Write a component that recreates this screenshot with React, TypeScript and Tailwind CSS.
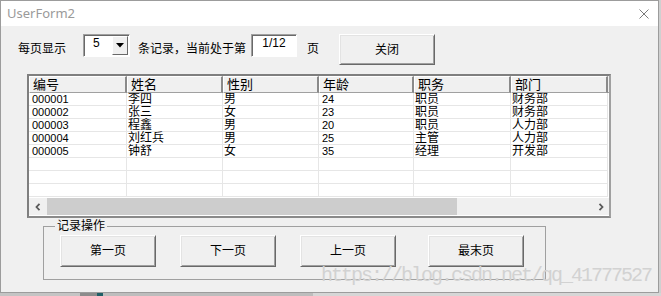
import React from 'react'

const rows = [
  ['000001', '李四', '男', '24', '职员', '财务部'],
  ['000002', '张三', '女', '23', '职员', '财务部'],
  ['000003', '程鑫', '男', '20', '职员', '人力部'],
  ['000004', '刘红兵', '男', '25', '主管', '人力部'],
  ['000005', '钟舒', '女', '35', '经理', '开发部'],
  ['', '', '', '', '', ''],
  ['', '', '', '', '', ''],
  ['', '', '', '', '', ''],
]

const cols = [
  { name: '编号', w: 'w-[98px]', num: true },
  { name: '姓名', w: 'w-[96px]', num: false },
  { name: '性别', w: 'w-[96px]', num: false },
  { name: '年龄', w: 'w-[95px]', num: true },
  { name: '职务', w: 'w-[97px]', num: false },
  { name: '部门', w: 'w-[97px]', num: false },
]

function Btn({ label, className }: { label: string; className: string }) {
  return (
    <button
      className={`flex items-center justify-center bg-[#f0f0f0] border border-t-white border-l-white border-r-[#696969] border-b-[#696969] shadow-[inset_1px_1px_0_#e3e3e3,inset_-1px_-1px_0_#a0a0a0] text-[12px] leading-3 text-black ${className}`}
    >
      {label}
    </button>
  )
}

function Chevron({ dir }: { dir: 'left' | 'right' }) {
  return (
    <svg width="6" height="8" viewBox="0 0 6 8">
      <path
        d={dir === 'left' ? 'M4.5 0.8 L1.5 4 L4.5 7.2' : 'M1.5 0.8 L4.5 4 L1.5 7.2'}
        fill="none"
        stroke="#5a5a5a"
        strokeWidth="1.8"
      />
    </svg>
  )
}

export default function App() {
  return (
    <div className="relative w-[661px] h-[296px] bg-[#cfd0d0] overflow-hidden font-['Liberation_Sans','Noto_Sans_CJK_SC',sans-serif] text-black">
      <div className="w-[659px] h-[293px] border border-[#9c9c9c] bg-[#f0f0f0] flex flex-col">
        {/* Title bar */}
        <div className="h-[25px] bg-white flex items-center justify-between pl-[6px] pr-[9px]">
          <span className="font-['Noto_Sans',sans-serif] text-[13px] text-[#9a9a9a]">UserForm2</span>
          <svg width="10" height="10" viewBox="0 0 10 10">
            <path d="M0.5 0.5 L9.5 9.5 M9.5 0.5 L0.5 9.5" stroke="#7a7a7a" strokeWidth="1" />
          </svg>
        </div>

        {/* Client area */}
        <div className="flex-1 flex flex-col pt-[8px]">
          {/* Top row */}
          <div className="flex items-start pl-[17px] text-[12px]">
            <span className="mt-[7px] leading-4">每页显示</span>
            <div className="ml-[17px] w-[47px] h-[23px] flex bg-white border border-[#a0a0a0] border-r-white border-b-white shadow-[inset_1px_1px_0_#696969]">
              <span className="flex-1 pl-[9px] pt-[1px] leading-[14px]">5</span>
              <div className="mt-[1px] mr-[1px] w-[16px] h-[19px] flex items-center justify-center bg-[#f0f0f0] border border-t-white border-l-white border-r-[#696969] border-b-[#696969]">
                <svg width="8" height="5" viewBox="0 0 8 5">
                  <path d="M0 0 L8 0 L4 4.5 Z" fill="#000" />
                </svg>
              </div>
            </div>
            <span className="ml-[8px] mt-[7px] leading-4">条记录，当前处于第</span>
            <div className="ml-[5px] w-[46px] h-[23px] bg-white border border-[#a0a0a0] border-r-white border-b-white shadow-[inset_1px_1px_0_#696969] text-center pt-[1px] leading-[14px]">
              1/12
            </div>
            <span className="ml-[10px] mt-[7px] leading-4">页</span>
            <Btn label="关闭" className="ml-[20px] w-[96px] h-[31px]" />
          </div>

          {/* List box */}
          <div className="mt-[9px] ml-[26px] w-[584px] h-[144px] bg-white border-2 border-[#7f7f7f] border-r-[#a0a0a0] border-b-[#8a8a8a] flex flex-col">
            <div className="flex h-[17px] bg-[#f0f0f0]">
              {cols.map((c) => (
                <div
                  key={c.name}
                  className={`${c.w} h-[17px] border-t border-l border-white border-r-2 border-r-[#8a8a8a] border-b border-b-[#a0a0a0] pl-[3px] text-[13px] leading-[15px]`}
                >
                  {c.name}
                </div>
              ))}
              <div className="flex-1 border-b border-b-[#a0a0a0]" />
            </div>

            <div className="h-[105px] overflow-hidden">
              {rows.map((r, i) => (
                <div key={i} className="flex h-[13px]">
                  {r.map((v, j) => (
                    <div
                      key={j}
                      className={`${cols[j].w} h-[13px] border-r border-b border-[#e6e6e6] ${
                        cols[j].num ? 'pl-[3px] text-[11px] leading-[12px]' : 'pl-[1px] text-[12px] leading-[12px]'
                      }`}
                    >
                      {v}
                    </div>
                  ))}
                </div>
              ))}
            </div>

            {/* Horizontal scrollbar */}
            <div className="flex h-[17px] bg-[#f0f0f0]">
              <div className="w-[18px] flex items-center justify-center">
                <Chevron dir="left" />
              </div>
              <div className="w-[410px] bg-[#cdcdcd]" />
              <div className="flex-1" />
              <div className="w-[17px] flex items-center justify-center">
                <Chevron dir="right" />
              </div>
            </div>
          </div>

          {/* Frame */}
          <fieldset className="mt-[2px] ml-[42px] w-[503px] border border-[#a0a0a0] pb-[12px]">
            <legend className="ml-[11px] px-[2px] text-[12px] leading-3">记录操作</legend>
            <div className="flex pt-[3px] pl-[16px]">
              <Btn label="第一页" className="w-[96px] h-[32px]" />
              <Btn label="下一页" className="ml-[24px] w-[96px] h-[32px]" />
              <Btn label="上一页" className="ml-[24px] w-[96px] h-[32px]" />
              <Btn label="最末页" className="ml-[32px] w-[96px] h-[32px]" />
            </div>
          </fieldset>
        </div>
      </div>

      {/* background strip under the window */}
      <div className="flex h-[3px]">
        <div className="w-[80px] bg-[#c4c4c4]" />
        <div className="w-[17px] bg-[#8c8c8c]" />
        <div className="w-[6px] bg-[#1f5f66]" />
        <div className="w-[210px] bg-[#bdbdbd]" />
        <div className="flex-1 bg-[#d6d6d6]" />
      </div>

      {/* watermark */}
      <div className="absolute left-[321px] top-[266px] font-['Liberation_Mono',monospace] text-[20px] leading-5 tracking-[-2px] text-[#d2d2d2] whitespace-nowrap pointer-events-none">
        https://blog.csdn.net/qq_41777527
      </div>
    </div>
  )
}
